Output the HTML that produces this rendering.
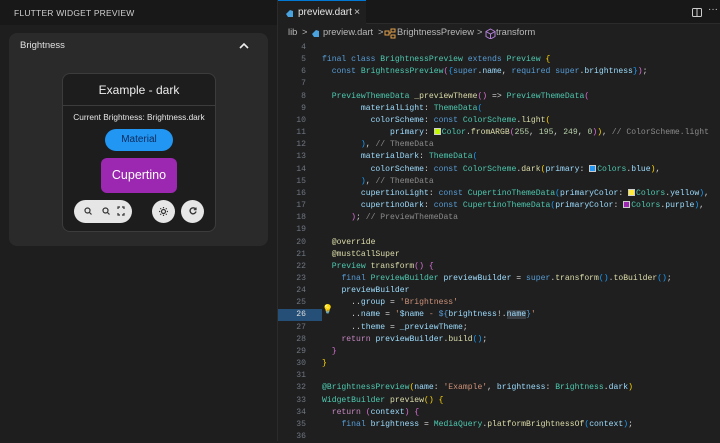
<!DOCTYPE html>
<html><head><meta charset="utf-8"><style>
*{margin:0;padding:0;box-sizing:border-box}
body{width:720px;height:441px;overflow:hidden;background:#1f1f1f;font-family:"Liberation Sans",sans-serif;position:relative}
.left{position:absolute;left:0;top:0;width:278px;height:441px;background:#1e1e1e;border-right:1px solid #2b2b2b}
.lh{position:absolute;left:0;top:0;width:277px;height:25px;background:#181818}
.hdr{position:absolute;left:14px;top:8px;font-size:8.5px;color:#cfcfcf;letter-spacing:.2px}
.card{position:absolute;left:9px;top:33px;width:259px;height:213px;background:#2a2a2a;border-radius:8px}
.abs{position:absolute}
.pv{position:absolute;left:62px;top:73px;width:154px;height:159px;background:#1d1d1d;border:1px solid #3c3c3c;border-radius:8px}
.btn{position:absolute;background:#e6e6e6;border-radius:12px}
.ed{position:absolute;left:278px;top:0;width:442px;height:441px;background:#1f1f1f}
.tabbar{position:absolute;left:0;top:0;width:442px;height:24px;background:#181818;border-bottom:1px solid #2b2b2b}
.tab{position:absolute;left:0;top:0;width:88px;height:24px;background:#1f1f1f;border-top:1px solid #0078d4}
.bc{position:absolute;top:27px;font-size:9.3px;color:#b8b8b8;white-space:pre}
.code{position:absolute;left:0;top:42px;font-family:"Liberation Mono",monospace;font-size:8.1px;line-height:12.16px;color:#d4d4d4;white-space:pre}
.ln{position:absolute;left:0;width:28px;text-align:right;color:#6e7681}
.cl{position:absolute;left:44px}
.k{color:#569cd6}.c{color:#c586c0}.t{color:#4ec9b0}.v{color:#9cdcfe}.f{color:#dcdcaa}.s{color:#ce9178}.m{color:#8b8b8b}.y{color:#ffd700}.p{color:#da70d6}.b{color:#179fff}
.sw{display:inline-block;width:7px;height:7px;vertical-align:-1px;border:1px solid #ccc;margin-right:1px}
</style></head><body>
<div class="left">
<div class="lh"></div>
<div class="hdr">FLUTTER WIDGET PREVIEW</div>
<div class="card">
<div class="abs" style="left:11px;top:7px;font-size:9.5px;color:#e0e0e0">Brightness</div>
<svg class="abs" style="left:230px;top:9px" width="10" height="8"><path d="M1 6 L5 2 L9 6" stroke="#eee" stroke-width="1.6" fill="none"/></svg>
</div>
<div class="pv">
<div class="abs" style="left:0;top:9px;width:152px;text-align:center;font-size:12px;color:#eee">Example - dark</div>
<div class="abs" style="left:0;top:31px;width:152px;height:1px;background:#3c3c3c"></div>
<div class="abs" style="left:0;top:38px;width:152px;text-align:center;font-size:8.3px;color:#e6e6e6">Current Brightness: Brightness.dark</div>
<div class="abs" style="left:42px;top:55px;width:68px;height:22px;background:#2196f3;border-radius:11px;text-align:center;padding-top:5px;font-size:10px;line-height:12px;color:#0d2b5c">Material</div>
<div class="abs" style="left:38px;top:84px;width:76px;height:35px;background:#9c27b0;border-radius:6px;text-align:center;line-height:35px;font-size:12.5px;color:#fff">Cupertino</div>
<div class="btn" style="left:11px;top:126px;width:58px;height:23px"></div>
<div class="btn" style="left:89px;top:126px;width:23px;height:23px"></div>
<div class="btn" style="left:118px;top:126px;width:23px;height:23px"></div>
<svg class="abs" style="left:11px;top:126px" width="140" height="23">
<g stroke="#333" stroke-width="1.2" fill="none"><circle cx="13.5" cy="10.5" r="2.5"/><path d="M15.5 12.5l2 2"/><circle cx="31.5" cy="10.5" r="2.5"/><path d="M33.5 12.5l2 2"/>
<path d="M44 9v-2h2M48 7h2v2M50 13v2h-2M46 15h-2v-2"/>
<circle cx="89.5" cy="11.5" r="2"/><path d="M89.5 7v1.2M89.5 14.8v1.2M85 11.5h1.2M92.8 11.5h1.2M86.3 8.3l.8.8M91.9 13.9l.8.8M86.3 14.7l.8-.8M91.9 9.1l.8-.8"/>
<path d="M121.5 9a3 3 0 1 0 .5 2.5" stroke-width="1.4"/><path d="M122 7.5v2.2h-2.2" stroke-width="1.2"/></g>
</svg>
</div>
</div>
<div class="ed">
<div class="tabbar"><div class="tab">
<svg class="abs" style="left:7px;top:8px" width="9" height="9"><path d="M1 5 L5 1 L8 2 L8 8 L3 8Z" fill="#4aa3df"/></svg>
<div class="abs" style="left:20px;top:6px;font-size:10px;color:#e6e6e6">preview.dart</div>
<div class="abs" style="left:76px;top:5px;font-size:10.5px;color:#ccc">×</div></div>
<svg class="abs" style="left:414px;top:8px" width="10" height="9"><rect x=".5" y=".5" width="9" height="8" rx="1" stroke="#ccc" fill="none"/><path d="M5 1v7" stroke="#ccc"/></svg>
<div class="abs" style="left:430px;top:4px;font-size:10px;color:#ccc">···</div>
</div>
<div class="bc" style="left:10px">lib</div>
<div class="bc" style="left:24px">&gt;</div>
<svg class="abs" style="left:33px;top:29px" width="9" height="9"><path d="M1 5 L5 1 L8 2 L8 8 L3 8Z" fill="#4aa3df"/></svg>
<div class="bc" style="left:45px">preview.dart</div>
<div class="bc" style="left:100px">&gt;</div>
<svg class="abs" style="left:106px;top:28px" width="12" height="11"><path d="M1 3h4v4h-4zM7 1h4v3h-4zM7 7h4v3h-4zM5 5h2" stroke="#e2a04a" fill="none"/></svg>
<div class="bc" style="left:119px">BrightnessPreview</div>
<div class="bc" style="left:199px">&gt;</div>
<svg class="abs" style="left:207px;top:28px" width="11" height="11"><path d="M5.5 1l4.5 2.5v5l-4.5 2.5-4.5-2.5v-5zM1 3.5l4.5 2.5 4.5-2.5M5.5 6v5" stroke="#b180d7" fill="none"/></svg>
<div class="bc" style="left:218px">transform</div>
<div class="abs" style="left:0;top:309px;width:44px;height:12px;background:#264f78"></div>
<div class="abs" style="left:44px;top:304px;font-size:9px">💡</div>
<div class="code">
<div class="ln" style="top:0">4
5
6
7
8
9
10
11
12
13
14
15
16
17
18
19
20
21
22
23
24
25
<span style="color:#ddd">26</span>
27
28
29
30
31
32
33
34
35
36</div>
<div class="cl" style="top:0">
<span class="k">final class</span> <span class="t">BrightnessPreview</span> <span class="k">extends</span> <span class="t">Preview</span> <span class="y">{</span>
  <span class="k">const</span> <span class="t">BrightnessPreview</span><span class="p">(</span><span class="b">{</span><span class="k">super</span>.<span class="v">name</span>, <span class="k">required super</span>.<span class="v">brightness</span><span class="b">}</span><span class="p">)</span>;

  <span class="t">PreviewThemeData</span> <span class="f">_previewTheme</span><span class="p">()</span> =&gt; <span class="t">PreviewThemeData</span><span class="p">(</span>
        <span class="v">materialLight</span>: <span class="t">ThemeData</span><span class="b">(</span>
          <span class="v">colorScheme</span>: <span class="k">const</span> <span class="t">ColorScheme</span>.<span class="f">light</span><span class="y">(</span>
              <span class="v">primary</span>: <span class="sw" style="background:#c3f900"></span><span class="t">Color</span>.<span class="f">fromARGB</span><span class="p">(</span><span style="color:#b5cea8">255</span>, <span style="color:#b5cea8">195</span>, <span style="color:#b5cea8">249</span>, <span style="color:#b5cea8">0</span><span class="p">)</span><span class="y">)</span>, <span class="m">// ColorScheme.light</span>
        <span class="b">)</span>, <span class="m">// ThemeData</span>
        <span class="v">materialDark</span>: <span class="t">ThemeData</span><span class="b">(</span>
          <span class="v">colorScheme</span>: <span class="k">const</span> <span class="t">ColorScheme</span>.<span class="f">dark</span><span class="y">(</span><span class="v">primary</span>: <span class="sw" style="background:#2196f3"></span><span class="t">Colors</span>.<span class="v">blue</span><span class="y">)</span>,
        <span class="b">)</span>, <span class="m">// ThemeData</span>
        <span class="v">cupertinoLight</span>: <span class="k">const</span> <span class="t">CupertinoThemeData</span><span class="b">(</span><span class="v">primaryColor</span>: <span class="sw" style="background:#ffeb3b"></span><span class="t">Colors</span>.<span class="v">yellow</span><span class="b">)</span>,
        <span class="v">cupertinoDark</span>: <span class="k">const</span> <span class="t">CupertinoThemeData</span><span class="b">(</span><span class="v">primaryColor</span>: <span class="sw" style="background:#9c27b0"></span><span class="t">Colors</span>.<span class="v">purple</span><span class="b">)</span>,
      <span class="p">)</span>; <span class="m">// PreviewThemeData</span>

  <span class="f">@override</span>
  <span class="f">@mustCallSuper</span>
  <span class="t">Preview</span> <span class="f">transform</span><span class="p">()</span> <span class="p">{</span>
    <span class="k">final</span> <span class="t">PreviewBuilder</span> <span class="v">previewBuilder</span> = <span class="k">super</span>.<span class="f">transform</span><span class="b">()</span>.<span class="f">toBuilder</span><span class="b">()</span>;
    <span class="v">previewBuilder</span>
      ..<span class="v">group</span> = <span class="s">'Brightness'</span>
      ..<span class="v">name</span> = <span class="s">'</span><span class="v">$name</span><span class="s"> - </span><span class="k">$</span><span class="k">{</span><span class="v">brightness</span>!.<span class="v" style="background:#3a3d41">name</span><span class="k">}</span><span class="s">'</span>
      ..<span class="v">theme</span> = <span class="v">_previewTheme</span>;
    <span class="c">return</span> <span class="v">previewBuilder</span>.<span class="f">build</span><span class="b">()</span>;
  <span class="p">}</span>
<span class="y">}</span>

<span class="t">@BrightnessPreview</span><span class="y">(</span><span class="v">name</span>: <span class="s">'Example'</span>, <span class="v">brightness</span>: <span class="t">Brightness</span>.<span class="v">dark</span><span class="y">)</span>
<span class="t">WidgetBuilder</span> <span class="f">preview</span><span class="y">()</span> <span class="y">{</span>
  <span class="c">return</span> <span class="p">(</span><span class="v">context</span><span class="p">)</span> <span class="p">{</span>
    <span class="k">final</span> <span class="v">brightness</span> = <span class="t">MediaQuery</span>.<span class="f">platformBrightnessOf</span><span class="b">(</span><span class="v">context</span><span class="b">)</span>;
</div>
</div>
</div>
</body></html>
